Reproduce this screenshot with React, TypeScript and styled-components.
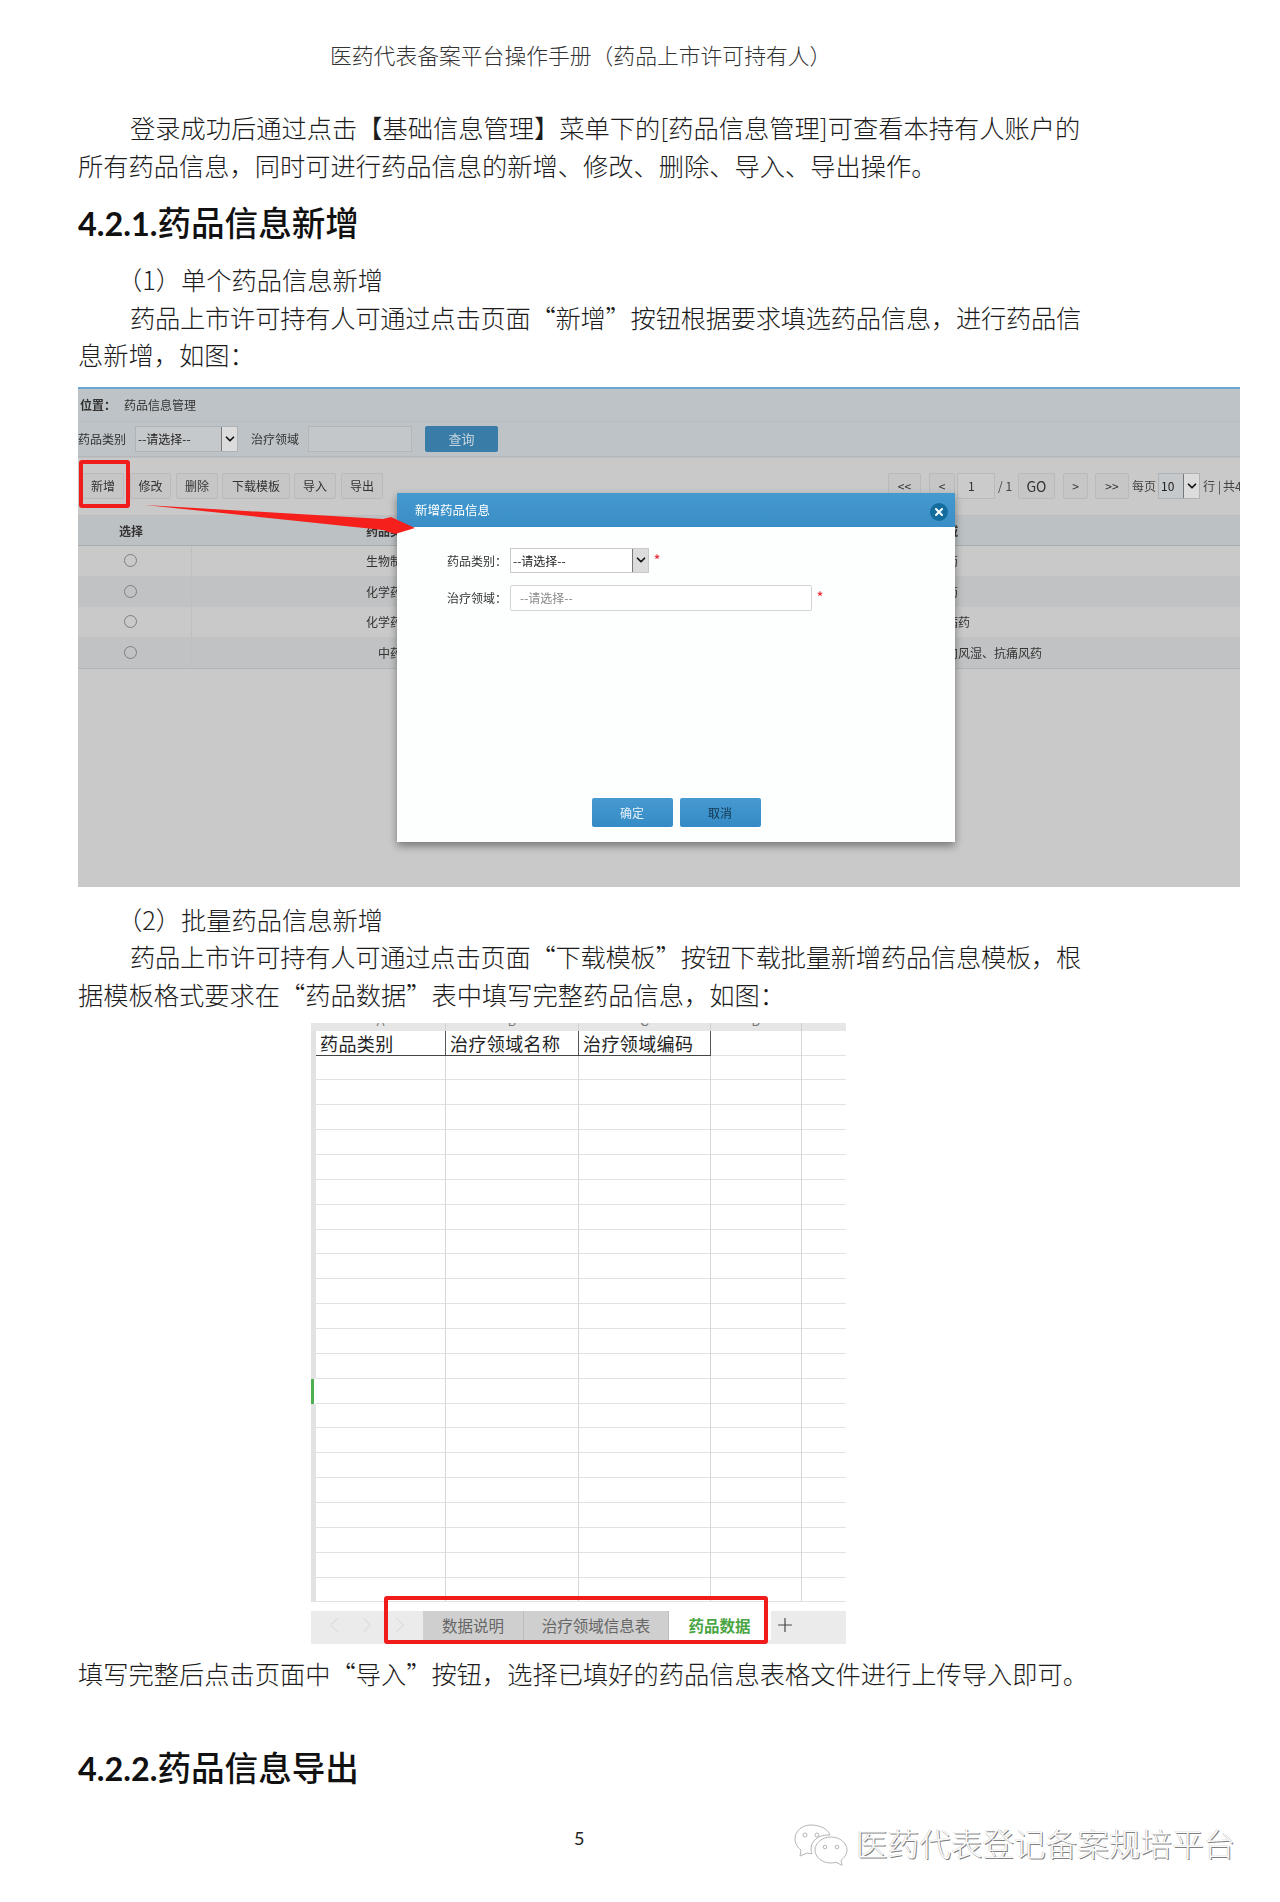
import React from 'react';
import styled, { createGlobalStyle } from 'styled-components';
import { ChevronDown, ChevronLeft, ChevronRight, Plus, X } from 'lucide-react';

const cjk = '"Noto Sans CJK SC", "Noto Sans", sans-serif';

const drugRows = [
  { type: '生物制品', area: '抗肿瘤药', shade: false },
  { type: '化学药品', area: '抗感染药', shade: true },
  { type: '化学药品', area: '抗糖尿病药', shade: false },
  { type: '中药', area: '骨骼肌肉风湿、抗痛风药', shade: true },
];

const toolButtons = [
  { text: '新增', w: 42, gap: 6 },
  { text: '修改', w: 41, gap: 5 },
  { text: '删除', w: 42, gap: 4 },
  { text: '下载模板', w: 68, gap: 4 },
  { text: '导入', w: 42, gap: 5 },
  { text: '导出', w: 42, gap: 0 },
];

const sheetRows = Array.from({ length: 22 }, (_, i) => i);

function DropArrow() {
  return (
    <ArrowBox>
      <ChevronDown size={14} strokeWidth={3} color="#111" />
    </ArrowBox>
  );
}

function App() {
  return (
    <Page lang="zh-CN">
      <GlobalStyle />
      <RunningHead>医药代表备案平台操作手册（药品上市许可持有人）</RunningHead>

      <Intro>
        登录成功后通过点击【基础信息管理】菜单下的[药品信息管理]可查看本持有人账户的所有药品信息，同时可进行药品信息的新增、修改、删除、导入、导出操作。
      </Intro>

      <Heading>
        <HeadingNo>4.2.1.</HeadingNo>药品信息新增
      </Heading>

      <Block>
        <SubHead>（1）单个药品信息新增</SubHead>
        <QuotePara>
          药品上市许可持有人可通过点击页面“新增”按钮根据要求填选药品信息，进行药品信息新增，如图：
        </QuotePara>
      </Block>

      <Shot>
        <CrumbBar>
          <b>位置：</b>
          <span>药品信息管理</span>
        </CrumbBar>
        <FilterBar>
          <FilterLabel $w={57}>药品类别</FilterLabel>
          <SelectBox $w={103} $h={26} $dim>
            --请选择--
            <DropArrow />
          </SelectBox>
          <FilterLabel $w={48} $gap={13}>
            治疗领域
          </FilterLabel>
          <FilterInput />
          <QueryButton>查询</QueryButton>
        </FilterBar>
        <ToolBar>
          <ToolGroup>
            {toolButtons.map((b) => (
              <GrayButton key={b.text} $w={b.w} $gap={b.gap}>
                {b.text}
              </GrayButton>
            ))}
          </ToolGroup>
          <Pager>
            <GrayButton $w={33} $gap={8}>&lt;&lt;</GrayButton>
            <GrayButton $w={26} $gap={2}>&lt;</GrayButton>
            <PageInput>1</PageInput>
            <PagerText $w={23}>/ 1</PagerText>
            <GrayButton $w={37} $gap={8} $big>GO</GrayButton>
            <GrayButton $w={25} $gap={7}>&gt;</GrayButton>
            <GrayButton $w={34} $gap={0}>&gt;&gt;</GrayButton>
            <PagerText $w={29}>每页</PagerText>
            <SelectBox $w={42} $h={26} $dim>
              10
              <DropArrow />
            </SelectBox>
            <PagerText $w={20}>行 |</PagerText>
            <PagerText $w={30}>共4</PagerText>
          </Pager>
        </ToolBar>
        <TableHead>
          <b>选择</b>
          <b>药品类别</b>
          <b>治疗领域</b>
        </TableHead>
        {drugRows.map((r) => (
          <TableRow key={r.area} $shade={r.shade}>
            <RadioCell>
              <Radio />
            </RadioCell>
            <span>{r.type}</span>
            <span>{r.area}</span>
          </TableRow>
        ))}

        <RedFrame $left={1} $top={71} $w={51} $h={48} />
        <Arrow viewBox="0 0 280 36" width={280} height={36}>
          <polygon points="0,1 238,15 246,13 270,24 250,30 238,26" fill="#f5201c" />
        </Arrow>

        <Modal>
          <ModalHead>
            新增药品信息
            <CloseDot>
              <X size={12} strokeWidth={4} color="#fff" />
            </CloseDot>
          </ModalHead>
          <ModalBody>
            <FormRow>
              <FormLabel>药品类别：</FormLabel>
              <SelectBox $w={139} $h={25}>
                --请选择--
                <DropArrow />
              </SelectBox>
              <Star>*</Star>
            </FormRow>
            <FormRow>
              <FormLabel>治疗领域：</FormLabel>
              <TextField>--请选择--</TextField>
              <Star>*</Star>
            </FormRow>
          </ModalBody>
          <ModalFoot>
            <BlueButton>确定</BlueButton>
            <BlueButton $dark>取消</BlueButton>
          </ModalFoot>
        </Modal>
      </Shot>

      <BlockSecond>
        <SubHead>（2）批量药品信息新增</SubHead>
        <QuotePara>
          药品上市许可持有人可通过点击页面“下载模板”按钮下载批量新增药品信息模板，根据模板格式要求在“药品数据”表中填写完整药品信息，如图：
        </QuotePara>
      </BlockSecond>

      <Sheet>
        <ColHeads>
          <i />
          <ColHead>A</ColHead>
          <ColHead>B</ColHead>
          <ColHead>C</ColHead>
          <ColHead>D</ColHead>
          <ColHead />
        </ColHeads>
        <SheetBody>
          <SheetRow $head>
            <RowStrip />
            <HeadCell>药品类别</HeadCell>
            <HeadCell>治疗领域名称</HeadCell>
            <HeadCell>治疗领域编码</HeadCell>
            <Cell />
            <Cell />
          </SheetRow>
          {sheetRows.map((i) => (
            <SheetRow key={i}>
              <RowStrip $active={i === 13} />
              <Cell />
              <Cell />
              <Cell />
              <Cell />
              <Cell />
            </SheetRow>
          ))}
        </SheetBody>
        <TabBar>
          <TabNav>
            <ChevronLeft size={26} strokeWidth={1} color="#dedede" />
            <ChevronRight size={26} strokeWidth={1} color="#dedede" />
            <ChevronRight size={26} strokeWidth={1} color="#dedede" />
          </TabNav>
          <Tab $w={101}>数据说明</Tab>
          <Tab $w={145}>治疗领域信息表</Tab>
          <Tab $w={102} $active>药品数据</Tab>
          <AddTab>
            <Plus size={22} strokeWidth={1.3} color="#444" />
          </AddTab>
        </TabBar>
        <RedFrame $left={73} $top={573} $w={384} $h={48} />
      </Sheet>

      <Closing>填写完整后点击页面中“导入”按钮，选择已填好的药品信息表格文件进行上传导入即可。</Closing>

      <HeadingLast>
        <HeadingNo>4.2.2.</HeadingNo>药品信息导出
      </HeadingLast>

      <Footer>
        <PageNo>5</PageNo>
        <Watermark>
          <svg width="54" height="42" viewBox="0 0 54 42" fill="none" stroke="#b5b5b5" strokeWidth="1">
            <path d="M17 1C8 1 1 7 1 15c0 5 3 9 6 11l-1 6 7-3c2 .5 3 .6 5 .6-.6-1.6-1-3-1-4.600 0-8 7-14 17-14h2C34 5 26 1 17 1z" />
            <circle cx="11" cy="11" r="2" />
            <circle cx="23" cy="11" r="2" />
            <path d="M37 13c-9 0-16 6-16 13s7 13 16 13c2 0 3-.2 5-.7l6 3-1-5c3-2.500 6-6 6-10.300 0-7-7-13-16-13z" />
            <circle cx="31" cy="23" r="1.800" />
            <circle cx="43" cy="23" r="1.800" />
          </svg>
          <WatermarkText>医药代表登记备案规培平台</WatermarkText>
        </Watermark>
      </Footer>
    </Page>
  );
}

export default App;

// Styles
const GlobalStyle = createGlobalStyle`
  html, body {
    margin: 0;
    background: #fff;
  }
`;

const Page = styled.div`
  width: 1280px;
  height: 1902px;
  box-sizing: border-box;
  padding: 36px 40px 0 78px;
  overflow: hidden;
  font-family: ${cjk};
  font-weight: 300;
  color: #1c1c1c;
`;

const RunningHead = styled.div`
  padding-left: 252px;
  font-size: 21.8px;
  line-height: 38px;
  color: #333;
  white-space: nowrap;
`;

const Para = styled.p`
  margin: 0;
  width: 1020px;
  font-size: 25.25px;
  line-height: 37.5px;
  text-indent: 52px;
`;

const QuotePara = styled(Para)`
  &::first-line {
    letter-spacing: -0.22px;
  }
`;

const SubHead = styled(Para)`
  text-indent: 39px;
`;

const Intro = styled(Para)`
  margin-top: 35px;
`;

const Heading = styled.h2`
  margin: 12.5px 0 0;
  height: 50px;
  font-size: 33.6px;
  line-height: 50px;
  font-weight: 500;
  color: #111;
`;

const HeadingLast = styled(Heading)`
  margin-top: 50px;
`;

const HeadingNo = styled.span`
  font-family: Lato, sans-serif;
  font-size: 32.4px;
  font-weight: 700;
`;

const Block = styled.div`
  margin-top: 14.5px;
`;

const BlockSecond = styled.div`
  margin-top: 14px;
`;

const Shot = styled.div`
  position: relative;
  margin-top: 13px;
  width: 1162px;
  height: 500px;
  overflow: hidden;
  background: #c9c9c9;
  border-top: 2px solid #6aa6d2;
  box-sizing: border-box;
  font-size: 12px;
  font-weight: 400;
  color: #333;
  filter: blur(0.4px);
`;

const CrumbBar = styled.div`
  display: flex;
  align-items: center;
  gap: 8px;
  height: 33px;
  padding-left: 2px;
  background: #bdc3c6;
  border-bottom: 1px solid #b8bcbe;
  box-sizing: border-box;
`;

const FilterBar = styled.div`
  display: flex;
  align-items: center;
  height: 35px;
  background: #bdc3c6;
  border-bottom: 1px solid #b4b8ba;
  box-sizing: border-box;
`;

const FilterLabel = styled.span<{ $w: number; $gap?: number }>`
  width: ${(p) => p.$w}px;
  margin-left: ${(p) => p.$gap || 0}px;
  white-space: nowrap;
`;

const ArrowBox = styled.span`
  display: flex;
  align-items: center;
  justify-content: center;
  width: 16px;
  height: 100%;
  margin-left: auto;
  background: #dcdcdc;
  border-left: 1px solid #777;
  box-sizing: border-box;
`;

const SelectBox = styled.div<{ $w: number; $h: number; $dim?: boolean }>`
  display: flex;
  align-items: center;
  flex-shrink: 0;
  width: ${(p) => p.$w}px;
  height: ${(p) => p.$h}px;
  padding-left: 2px;
  background: ${(p) => (p.$dim ? '#c6c9cb' : '#fff')};
  border: 1px solid ${(p) => (p.$dim ? '#b0b3b5' : '#c9c9c9')};
  box-sizing: border-box;
  color: #222;
  white-space: nowrap;
`;

const FilterInput = styled.div`
  width: 104px;
  height: 26px;
  margin-left: 9px;
  background: #c4c7c9;
  border: 1px solid #b3b6b8;
  box-sizing: border-box;
`;

const QueryButton = styled.div`
  display: flex;
  align-items: center;
  justify-content: center;
  width: 73px;
  height: 26px;
  margin-left: 13px;
  border-radius: 2px;
  background: #3a7ca8;
  color: #c4d4de;
  font-size: 13px;
`;

const ToolBar = styled.div`
  display: flex;
  align-items: flex-start;
  height: 59px;
  padding-top: 15px;
  background: #c9c9c9;
  border-bottom: 1px solid #bdbdbd;
  border-top: 1px solid #bcbfc1;
  box-sizing: border-box;
`;

const ToolGroup = styled.div`
  display: flex;
  flex-shrink: 0;
  width: 810px;
  padding-left: 4px;
  box-sizing: border-box;
`;

const Pager = styled.div`
  display: flex;
  align-items: center;
  flex-shrink: 0;
`;

const GrayButton = styled.div<{ $w: number; $gap: number; $big?: boolean }>`
  display: flex;
  align-items: center;
  justify-content: center;
  flex-shrink: 0;
  width: ${(p) => p.$w}px;
  height: 26px;
  margin-right: ${(p) => p.$gap}px;
  background: #c6c6c6;
  border: 1px solid #bababa;
  border-radius: 2px;
  box-sizing: border-box;
  font-size: ${(p) => (p.$big ? 14 : 12)}px;
  color: #333;
`;

const PageInput = styled.div`
  display: flex;
  align-items: center;
  width: 38px;
  height: 26px;
  padding-left: 10px;
  background: #cbcbcb;
  border: 1px solid #bababa;
  box-sizing: border-box;
`;

const PagerText = styled.span<{ $w: number }>`
  flex-shrink: 0;
  width: ${(p) => p.$w}px;
  padding-left: 3px;
  box-sizing: border-box;
  white-space: nowrap;
  color: #444;
`;

const TableHead = styled.div`
  display: grid;
  grid-template-columns: 114px 396px 1fr;
  align-items: center;
  height: 30px;
  background: #bcc1c4;
  border-bottom: 1px solid #a9adb0;
  box-sizing: border-box;
  text-align: center;

  > b:first-child {
    padding-right: 8px;
  }

  > b:last-child {
    text-align: left;
    padding-left: 322px;
  }
`;

const TableRow = styled.div<{ $shade: boolean }>`
  display: grid;
  grid-template-columns: 114px 396px 1fr;
  align-items: center;
  height: 30.5px;
  background: ${(p) => (p.$shade ? '#c1c2c3' : '#c9c9c9')};
  text-align: center;

  &:nth-child(8) {
    border-bottom: 1px solid #b2b4b5;
  }

  > span:last-child {
    text-align: left;
    padding-left: 322px;
  }
`;

const RadioCell = styled.div`
  display: flex;
  align-items: center;
  justify-content: center;
  height: 100%;
  padding-right: 8px;
  border-right: 1px solid #bfbfbf;
  box-sizing: border-box;
`;

const Radio = styled.span`
  width: 13px;
  height: 13px;
  border: 1px solid #7f7f7f;
  border-radius: 50%;
  box-sizing: border-box;
`;

const RedFrame = styled.div<{ $left: number; $top: number; $w: number; $h: number }>`
  position: absolute;
  left: ${(p) => p.$left}px;
  top: ${(p) => p.$top}px;
  width: ${(p) => p.$w}px;
  height: ${(p) => p.$h}px;
  border: 4px solid #f01c1c;
  border-radius: 3px;
  box-sizing: border-box;
`;

const Arrow = styled.svg`
  position: absolute;
  left: 67px;
  top: 115px;
  z-index: 3;
`;

const Modal = styled.div`
  position: absolute;
  left: 319px;
  top: 104px;
  z-index: 2;
  display: flex;
  flex-direction: column;
  width: 558px;
  height: 349px;
  background: #fdfefe;
  box-shadow: 0 4px 8px rgba(0, 0, 0, 0.4);
`;

const ModalHead = styled.div`
  display: flex;
  align-items: center;
  justify-content: space-between;
  height: 34px;
  padding: 0 7px 0 18px;
  background: linear-gradient(#4499cf, #3a8ec6);
  box-sizing: border-box;
  color: #fff;
  font-size: 12.5px;
`;

const CloseDot = styled.span`
  display: flex;
  align-items: center;
  justify-content: center;
  width: 18px;
  height: 18px;
  margin-top: 4px;
  border-radius: 50%;
  background: #146d9f;
`;

const ModalBody = styled.div`
  display: flex;
  flex-direction: column;
  gap: 12px;
  padding: 21px 0 0 50px;
  flex: 1;
`;

const FormRow = styled.div`
  display: flex;
  align-items: center;
`;

const FormLabel = styled.span`
  width: 63px;
  white-space: nowrap;
  color: #333;
`;

const TextField = styled.div`
  display: flex;
  align-items: center;
  width: 302px;
  height: 26px;
  padding-left: 9px;
  background: #fff;
  border: 1px solid #d4d4d4;
  border-radius: 2px;
  box-sizing: border-box;
  color: #888;
`;

const Star = styled.span`
  margin: 0 0 4px 5px;
  color: #e8323c;
  font-weight: 700;
`;

const ModalFoot = styled.div`
  display: flex;
  justify-content: center;
  gap: 7px;
  padding-bottom: 15px;
`;

const BlueButton = styled.div<{ $dark?: boolean }>`
  display: flex;
  align-items: center;
  justify-content: center;
  width: 81px;
  height: 29px;
  border-radius: 2px;
  background: linear-gradient(#479ad0, #358bc6);
  color: ${(p) => (p.$dark ? '#12344e' : '#e6f2fa')};
`;

const Sheet = styled.div`
  position: relative;
  display: flex;
  flex-direction: column;
  margin: 9.5px 0 0 233px;
  width: 535px;
  height: 622px;
  background: #fff;
  font-weight: 400;
`;

const ColHeads = styled.div`
  display: grid;
  grid-template-columns: 5px 130px 133px 132px 91px 44px;
  height: 8px;
  overflow: hidden;
  background: #e6e6e6;
`;

const ColHead = styled.span`
  position: relative;
  top: -9px;
  height: 17px;
  line-height: 17px;
  border-right: 1px solid #d0d0d0;
  box-sizing: border-box;
  font-family: "Liberation Sans", sans-serif;
  font-size: 12px;
  text-align: center;
  color: #777;

  &:last-child {
    border-right: none;
  }
`;

const SheetBody = styled.div`
  flex: 1;
  overflow: hidden;
`;

const SheetRow = styled.div<{ $head?: boolean }>`
  display: grid;
  grid-template-columns: 5px 130px 133px 132px 91px 44px;
  height: ${(p) => (p.$head ? 25 : 24.86)}px;
`;

const RowStrip = styled.span<{ $active?: boolean }>`
  background: ${(p) => (p.$active ? '#4caf50' : '#e2e2e2')};
  width: ${(p) => (p.$active ? 3 : 5)}px;
`;

const Cell = styled.span`
  border-right: 1px solid #d6d6d6;
  border-bottom: 1px solid #e2e2e2;
  box-sizing: border-box;

  &:last-child {
    border-right: none;
  }
`;

const HeadCell = styled.span`
  padding-left: 4px;
  border-right: 1.5px solid #555;
  border-bottom: 1.5px solid #444;
  box-sizing: border-box;
  font-size: 18px;
  letter-spacing: 0.4px;
  line-height: 24px;
  color: #222;
  white-space: nowrap;
`;

const TabBar = styled.div`
  display: flex;
  align-items: flex-start;
  flex-shrink: 0;
  height: 33px;
  margin-bottom: 1px;
  background: #ebebeb;
`;

const TabNav = styled.div`
  display: flex;
  align-items: center;
  justify-content: space-around;
  width: 112px;
  height: 29px;
  padding: 0 6px;
  box-sizing: border-box;
`;

const Tab = styled.div<{ $w: number; $active?: boolean }>`
  display: flex;
  align-items: center;
  justify-content: center;
  width: ${(p) => p.$w}px;
  height: 29px;
  background: ${(p) => (p.$active ? '#fff' : '#cfcfcf')};
  border-right: 1px solid ${(p) => (p.$active ? '#fff' : '#bdbdbd')};
  box-sizing: border-box;
  font-size: 15.5px;
  font-weight: ${(p) => (p.$active ? 700 : 400)};
  color: ${(p) => (p.$active ? '#4aa544' : '#666')};
`;

const AddTab = styled.div`
  display: flex;
  align-items: center;
  height: 29px;
  padding-left: 3px;
`;

const Closing = styled.p`
  margin: 10px 0 0;
  font-size: 25.25px;
  line-height: 37.5px;
  white-space: nowrap;
`;

const Footer = styled.div`
  display: flex;
  align-items: flex-start;
  margin-top: 34px;
`;

const PageNo = styled.span`
  width: 718px;
  padding-left: 496px;
  box-sizing: border-box;
  font-family: Lato, sans-serif;
  font-size: 18px;
  line-height: 24px;
  font-weight: 400;
  color: #222;
`;

const Watermark = styled.div`
  display: flex;
  align-items: center;
  gap: 8px;
  width: 450px;
  margin-top: -2px;
`;

const WatermarkText = styled.span`
  margin-top: -6px;
  font-size: 31.6px;
  line-height: 42px;
  color: #fbfbfb;
  text-shadow: 1px 1px 0 #808080, -0.5px -0.5px 0 #c4c4c4;
  white-space: nowrap;
`;
